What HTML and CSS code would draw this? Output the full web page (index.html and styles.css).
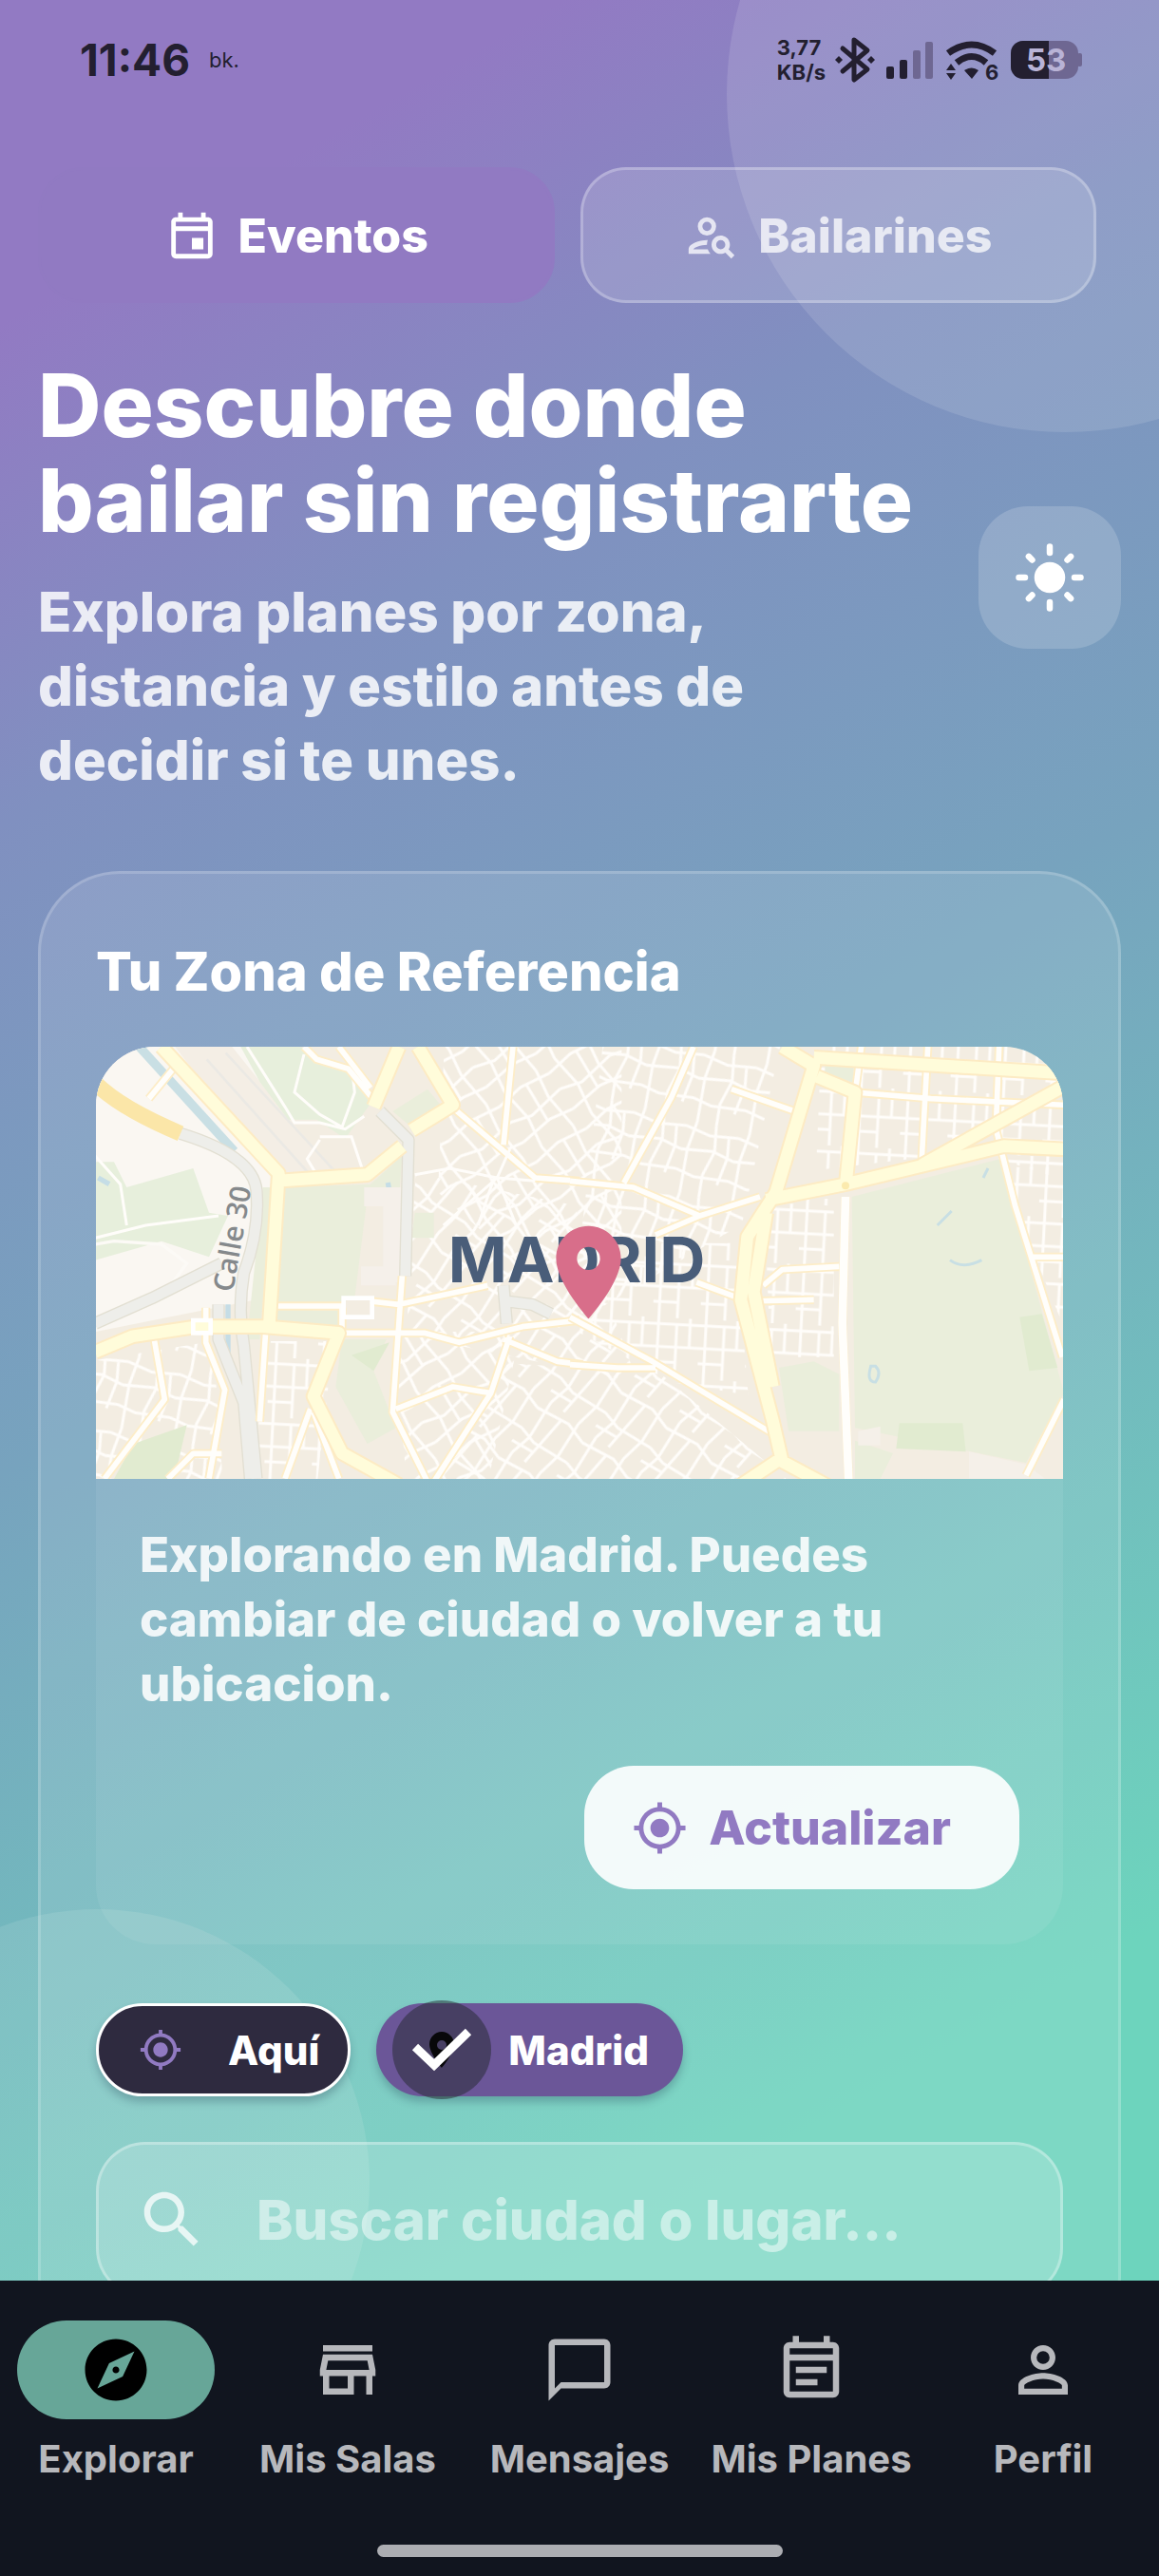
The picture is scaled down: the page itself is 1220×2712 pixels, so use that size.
FILE: index.html
```html
<!DOCTYPE html>
<html lang="es">
<head>
    <meta charset="UTF-8">
    <meta name="viewport" content="width=device-width, initial-scale=1.0">
    <title>Explorar</title>
    <link rel="stylesheet" href="styles.css">
</head>
<body>
    <div class="screen">
        <div class="glow glow-top"></div>
        <div class="glow glow-bottom"></div>

        <div class="status-bar">
            <span class="clock">11:46</span>
            <span class="carrier">bk.</span>
            <span class="speed">3,77<br>KB/s</span>
            <svg class="status-icons" viewBox="0 0 264 50" aria-hidden="true">
                <!-- bluetooth -->
                <path d="M10 13l26 22-14 11V4l14 11L10 37" fill="none" stroke="#231f30" stroke-width="5" stroke-linejoin="round" stroke-linecap="round"/>
                <path d="M6 21l4 4-4 4-4-4zM40 21l4 4-4 4-4-4z" fill="#231f30"/>
                <!-- signal -->
                <rect x="56" y="32" width="8" height="13" rx="2" fill="#231f30"/>
                <rect x="70" y="25" width="8" height="20" rx="2" fill="#231f30"/>
                <rect x="84" y="15" width="8" height="30" rx="2" fill="#6e6792"/>
                <rect x="97" y="6" width="8" height="39" rx="2" fill="#6e6792"/>
                <!-- wifi -->
                <path d="M121 18q25-18 49 0M130 28q16-13 31 0" fill="none" stroke="#231f30" stroke-width="7"/>
                <path d="M138 36q8-5 15 0l-7 9zM119 36l5-7 5 7zM119 39l5 7 5-7z" fill="#231f30"/>
                <text x="160" y="46" class="wifi-gen">6</text>
                <!-- battery -->
                <rect x="187" y="5" width="71" height="40" rx="13" fill="#6e6792"/>
                <rect x="257" y="18" width="5" height="14" rx="2" fill="#6e6792"/>
                <path d="M200 5h27v40h-27a13 13 0 0 1-13-13V18a13 13 0 0 1 13-13z" fill="#231f30"/>
                <text x="203" y="37" class="battery-level">53</text>
            </svg>
        </div>

        <main class="content">
            <div class="tabs">
                <button class="tab tab-active" type="button">
                    <svg viewBox="0 0 24 24" aria-hidden="true"><path d="M19 4h-1V2h-2v2H8V2H6v2H5c-1.11 0-1.99.9-1.99 2L3 20c0 1.1.89 2 2 2h14c1.1 0 2-.9 2-2V6c0-1.1-.9-2-2-2zm0 16H5V10h14v10zm0-12H5V6h14v2zm-7 5h5v5h-5z"/></svg>
                    Eventos
                </button>
                <button class="tab" type="button">
                    <svg viewBox="0 0 24 24" aria-hidden="true"><path fill-rule="evenodd" d="M10 4a4 4 0 1 0 0 8 4 4 0 0 0 0-8zm0 2a2 2 0 1 1 0 4 2 2 0 0 1 0-4zM4 18c.22-.72 3.31-2 6-2 0-.7.13-1.37.35-1.99C7.62 13.91 2 15.27 2 18v2h9.54c-.52-.58-.93-1.25-1.19-2H4zM19.43 18.02c.36-.59.57-1.28.57-2.02 0-2.21-1.79-4-4-4s-4 1.79-4 4 1.79 4 4 4c.74 0 1.43-.22 2.02-.57L20.59 22 22 20.59l-2.57-2.57zM16 18a2 2 0 1 1 0-4 2 2 0 0 1 0 4z"/></svg>
                    Bailarines
                </button>
            </div>

            <header class="intro">
                <div class="intro-text">
                    <h1>Descubre donde<br>bailar sin registrarte</h1>
                    <p>Explora planes por zona,<br>distancia y estilo antes de<br>decidir si te unes.</p>
                </div>
                <button class="theme-button" type="button" aria-label="Cambiar tema">
                    <svg viewBox="0 0 24 24" aria-hidden="true">
                        <circle cx="12" cy="12" r="5"/>
                        <path d="M12 2v2M12 20v2M2 12h2M20 12h2M5.2 5.2l1.1 1.1M17.7 17.7l1.1 1.1M5.2 18.8l1.1-1.1M17.7 6.3l1.1-1.1" fill="none" stroke="#fff" stroke-width="2" stroke-linecap="round"/>
                    </svg>
                </button>
            </header>

            <section class="zone-card">
                <h2>Tu Zona de Referencia</h2>

                <div class="zone-box">
                    <div class="map">
                        <svg class="map-tiles" viewBox="0 0 3054 1365" preserveAspectRatio="xMidYMid slice" role="img" aria-label="Mapa de Madrid">
                            <defs>
                                <pattern id="blocksA" width="170" height="230" patternUnits="userSpaceOnUse" patternTransform="rotate(14)">
                                    <path d="M0 20l80 14 90-14M0 96l100-16 70 16M0 160l60 12 110-12M30 0l-10 90 10 140M92 0l14 80-20 80 6 70M140 30l10 60-12 90" class="lane"/>
                                </pattern>
                                <pattern id="blocksB" width="190" height="210" patternUnits="userSpaceOnUse" patternTransform="rotate(-34)">
                                    <path d="M0 30l90-14 100 14M0 90l70 20 120-20M0 165l110-14 80 14M40 0l16 110-16 100M110 16l-8 140M160 0l-14 90 14 120" class="lane"/>
                                </pattern>
                                <pattern id="blocksC" width="150" height="190" patternUnits="userSpaceOnUse" patternTransform="rotate(3)">
                                    <path d="M0 20h150M0 92h150M0 140h80M20 0v190M78 20v170M120 0v92" class="lane"/>
                                </pattern>
                                <pattern id="blocksD" width="180" height="200" patternUnits="userSpaceOnUse" patternTransform="rotate(38)">
                                    <path d="M0 40l110-20 70 20M0 120l60 14 120-14M24 0l14 130-14 70M84 25l-10 175M134 0l12 120-12 80M0 170l74-10" class="lane"/>
                                </pattern>
                            </defs>
                            <rect width="3054" height="1365" fill="#f3ede2"/>

                            <!-- pale ground to the west -->
                            <path d="M0 0h560L560 420 500 800 0 900z" fill="#faf7f2"/>
                            <path d="M250 0h180l320 400-190 10z" fill="#f4eee5"/>

                            <!-- street blocks -->
                            <path d="M1100 0h560v700l-240 60-340-300z" fill="url(#blocksB)"/>
                            <path d="M1600 0h560l-120 560-540 320z" fill="url(#blocksA)"/>
                            <path d="M1010 400l500 100 200 560-730-150z" fill="url(#blocksD)"/>
                            <path d="M1560 620h460l40 480-240-40-300-160z" fill="url(#blocksC)"/>
                            <path d="M940 900h400l-100 465H980z" fill="url(#blocksB)"/>
                            <path d="M1300 1000l480 30 400 335H1080z" fill="url(#blocksD)"/>
                            <path d="M2290 0h764v420l-280-90-500 60z" fill="url(#blocksC)"/>
                            <path d="M520 930h230l-50 435H510z" fill="url(#blocksC)"/>
                            <path d="M0 990l370-60 30 435H0z" fill="url(#blocksA)"/>
                            <path d="M2850 380h204v500z" fill="url(#blocksC)"/>
                            <path d="M2110 480h220v500h-200z" fill="url(#blocksC)"/>
                            <path d="M350 40l340 380M410 20l360 390" class="rail"/>

                            <g transform="translate(-33 -36)">
                                <!-- parks -->
                                <path d="M490 36h190l160 80 60 100-80 110-90-60-90 0-90-120z" class="park"/>
                                <path d="M30 400h60l40 80 210-60 50 140 60 10-60 130-150-50-210 60z" class="park"/>
                                <path d="M600 480l300-10 100-90-10 140-100-10-40 320-270 80z" class="garden"/>
                                <path d="M970 240l110-70 50 60-100 60zM1040 560h60v80h-70z" class="garden"/>
                                <path d="M560 480h30l-40 480h-40zM590 870h210v50H590z" class="garden"/>
                                <path d="M810 960h140l-40 100 70 180-90 50-100-180z" class="garden"/>
                                <path d="M840 1010l120-40-50 90z" class="lawn"/>
                                <path d="M90 1401l60-110 170-60-40 170z" class="lawn"/>
                                <!-- water -->
                                <path d="M170 36l300 330" fill="none" stroke="#c9dfe4" stroke-width="28"/>
                                <path d="M450 850v160M955 465l5 30M40 450l35 20" fill="none" stroke="#c5dde6" stroke-width="16"/>
                                <!-- small ways inside the parks -->
                                <path d="M510 36l120 190 30 50 80 0 80 20 60-40M690 60l-30 120 80 70 70 40 40-110-10-90M30 640l160-40 230-30M30 380l80 90 20 130M740 320l100 0 40 120M740 330l-40 60 30 50" class="lane"/>
                                <path d="M30 660l60-10 150 10 80 60-60 80-180 90" fill="none" stroke="#fcfaf6" stroke-width="10"/>
                                <path d="M970 520v260M880 510l130 0M870 760h110" fill="none" stroke="#f5f0ea" stroke-width="60"/>
                                <!-- M-30 -->
                                <path d="M300 310q230 70 240 180 10 130-40 260-20 120 0 230l40 420M30 910l180-80 220-110M420 850l0 110 80 200 20 240" class="ring-edge"/>
                                <path d="M300 310q230 70 240 180 10 130-40 260-20 120 0 230l40 420M30 910l180-80 220-110M420 850l0 110 80 200 20 240" class="ring"/>
                                <path d="M930 240l90 90-10 430M1320 790l10 120M1330 840l80 10 60 30" class="ring-edge"/>
                                <path d="M930 240l90 90-10 430M1320 790l10 120M1330 840l80 10 60 30" class="ring"/>
                                <path d="M30 150q80 80 270 160" fill="none" stroke="#fbe6a8" stroke-width="50"/>

                                <!-- secondary streets -->
                                <path d="M290 90l-90 110M690 36l40 40 100 30 90 110M800 36l100 130M1350 36l-30 310M1150 220l270 230 140 10M570 855h240M810 860v80h260l110 30 200-50 180-20M900 840l90 10 280-60M1000 760l-30 430 110 220M980 1180l180-70 120 20M1340 950l-60 180-180 280M570 920l-20 300M210 920l40 230-190 250M380 860l0 110 60 150-50 280M260 1401l80-80h90M710 1180l-80 220M720 1190l80 210M1320 960l170 70 80 10" class="street-edge"/>
                                <path d="M290 90l-90 110M690 36l40 40 100 30 90 110M800 36l100 130M1350 36l-30 310M1150 220l270 230 140 10M570 855h240M810 860v80h260l110 30 200-50 180-20M900 840l90 10 280-60M1000 760l-30 430 110 220M980 1180l180-70 120 20M1340 950l-60 180-180 280M570 920l-20 300M210 920l40 230-190 250M380 860l0 110 60 150-50 280M260 1401l80-80h90M710 1180l-80 220M720 1190l80 210M1320 960l170 70 80 10" class="street"/>
                                <!-- avenues -->
                                <path d="M240 36l370 400-30 480M600 460l290-20 110-90M1030 300l130-80-110-184M990 36l-80 190M30 1000l120-50 200-30 210 0 240 20-80 200 90 180 180 100" class="avenue-edge"/>
                                <path d="M240 36l370 400-30 480M600 460l290-20 110-90M1030 300l130-80-110-184M990 36l-80 190M30 1000l120-50 200-30 210 0 240 20-80 200 90 180 180 100" class="avenue"/>
                                <path d="M340 900h55v40h-55zM815 830h90v60h-90z" fill="none" stroke="#fff" stroke-width="14"/>
                                <path d="M1040 440l110-20 150 30 120 10M1300 450l-170 150M1300 450l60 150M1290 450l-50 150M1300 450l40-90" class="lane"/>
                            </g>

                            <g transform="translate(1497 -36)">
                                <!-- Retiro and gardens -->
                                <path d="M890 510l470-120 200 740-120 220-540-110z" class="garden"/>
                                <path d="M660 1050l110-20 80 40v180H690zM805 80h90v70l-90-30zM900 1280l120 40-40 80h-80z" class="garden"/>
                                <path d="M1040 1225h200l10 90-220-10zM1420 890l70-10 50 170-90 10z" class="lawn"/>
                                <path d="M1320 420l-15 30M1160 600l45-45M1200 710q40 30 100 0M950 1045q-15 50 15 50 20-30 0-50z" fill="none" stroke="#c8dfe4" stroke-width="9"/>
                                <path d="M1260 1315l180 40 60 45h-240zM910 1250l70-15 0 60 -70 0z" fill="#f5f0e9"/>

                                <path d="M390 36l-70 160-150 270M0 460l200 20 210 90M270 630l140-60 190-60M510 170l200 70M920 36l-20 150M900 180l240 20 420 20M1130 36l-20 370M1355 36l-10 260 60 240 150 480M1460 700h100M400 780l160 60 210-5M610 790l60-50 180-10M870 510l-10 400 20 500M0 890l260 140 400 240M0 1040l150 10h120M1560 1150l-120 240" class="street-edge"/>
                                <path d="M390 36l-70 160-150 270M0 460l200 20 210 90M270 630l140-60 190-60M510 170l200 70M920 36l-20 150M900 180l240 20 420 20M1130 36l-20 370M1355 36l-10 260 60 240 150 480M1460 700h100M400 780l160 60 210-5M610 790l60-50 180-10M0 890l260 140 400 240M0 1040l150 10h120M1560 1150l-120 240" class="street"/>
                                <path d="M870 510l-10 400 20 500" fill="none" stroke="#fffefb" stroke-width="26"/>
                                <path d="M670 36l100 60-120 400-90 140-20 200 100 380 30 130 150 80M780 130l120 50-30 300M620 520l250-50 500-120 200 10M770 70l790 50M1110 410l450-250M620 560l-40 250 60 300M660 1340l-120 80" class="avenue-edge"/>
                                <path d="M670 36l100 60-120 400-90 140-20 200 100 380 30 130 150 80M780 130l120 50-30 300M620 520l250-50 500-120 200 10M770 70l790 50M1110 410l450-250M620 560l-40 250 60 300M660 1340l-120 80" class="avenue"/>
                                <circle cx="870" cy="475" r="12" fill="#fbeaae"/>
                            </g>

                            <text x="1112" y="744" class="city-name">MADRID</text>
                            <text transform="translate(432 778) rotate(-80)" class="road-name">Calle 30</text>
                        </svg>
                        <svg class="map-pin" viewBox="0 0 24 24" aria-hidden="true"><path d="M12 2C8.13 2 5 5.13 5 9c0 5.25 7 13 7 13s7-7.75 7-13c0-3.87-3.13-7-7-7zm0 9.5a2.5 2.5 0 0 1 0-5 2.5 2.5 0 0 1 0 5z"/></svg>
                    </div>
                    <div class="zone-info">
                        <p>Explorando en Madrid. Puedes<br>cambiar de ciudad o volver a tu<br>ubicacion.</p>
                        <button class="update-button" type="button">
                            <svg viewBox="0 0 24 24" aria-hidden="true"><path d="M12 8c-2.21 0-4 1.79-4 4s1.79 4 4 4 4-1.79 4-4-1.79-4-4-4zm8.94 3c-.46-4.17-3.77-7.48-7.94-7.94V1h-2v2.06C6.83 3.52 3.52 6.83 3.06 11H1v2h2.06c.46 4.17 3.77 7.48 7.94 7.94V23h2v-2.06c4.17-.46 7.48-3.77 7.94-7.94H23v-2h-2.06zM12 19c-3.87 0-7-3.13-7-7s3.13-7 7-7 7 3.13 7 7-3.13 7-7 7z"/></svg>
                            Actualizar
                        </button>
                    </div>
                </div>

                <div class="chips">
                    <button class="chip chip-here" type="button">
                        <svg viewBox="0 0 24 24" aria-hidden="true"><path d="M12 8c-2.21 0-4 1.79-4 4s1.79 4 4 4 4-1.79 4-4-1.79-4-4-4zm8.94 3c-.46-4.17-3.77-7.48-7.94-7.94V1h-2v2.06C6.83 3.52 3.52 6.83 3.06 11H1v2h2.06c.46 4.17 3.77 7.48 7.94 7.94V23h2v-2.06c4.17-.46 7.48-3.77 7.94-7.94H23v-2h-2.06zM12 19c-3.87 0-7-3.13-7-7s3.13-7 7-7 7 3.13 7 7-3.13 7-7 7z"/></svg>
                        Aquí
                    </button>
                    <button class="chip chip-city" type="button" aria-pressed="true">
                        <svg viewBox="0 0 104 104" aria-hidden="true">
                            <circle cx="52" cy="52" r="52" fill="#23272d" fill-opacity=".5"/>
                            <path fill-rule="evenodd" d="M52 33c-7 0-13 6-13 13 0 10 13 25 13 25s13-15 13-25c0-7-6-13-13-13zm0 9a5 5 0 1 1 0 10 5 5 0 0 1 0-10z" fill="#08080a"/>
                            <path d="M24 49l20 19 36-35" fill="none" stroke="#fff" stroke-width="9"/>
                        </svg>
                        Madrid
                    </button>
                </div>

                <label class="search">
                    <svg viewBox="0 0 24 24" aria-hidden="true"><path d="M15.5 14h-.79l-.28-.27C15.41 12.59 16 11.11 16 9.5 16 5.91 13.09 3 9.5 3S3 5.91 3 9.5 5.91 16 9.5 16c1.61 0 3.09-.59 4.23-1.57l.27.28v.79l5 4.99L20.49 19l-4.99-5zm-6 0C7.01 14 5 11.99 5 9.5S7.01 5 9.5 5 14 7.01 14 9.5 11.99 14 9.5 14z"/></svg>
                    <input type="text" name="city" placeholder="Buscar ciudad o lugar..." aria-label="Buscar ciudad o lugar">
                </label>
            </section>
        </main>
    </div>

    <nav class="bottom-nav">
        <div class="nav-items">
            <a class="nav-item nav-active" href="#">
                <span class="nav-icon"><svg viewBox="0 0 24 24" aria-hidden="true"><path d="M12 10.9c-.61 0-1.1.49-1.1 1.1s.49 1.1 1.1 1.1c.61 0 1.1-.49 1.1-1.1s-.49-1.1-1.1-1.1zM12 2C6.48 2 2 6.48 2 12s4.48 10 10 10 10-4.48 10-10S17.52 2 12 2zm2.19 12.19L6 18l3.81-8.19L18 6l-3.81 8.19z"/></svg></span>
                Explorar
            </a>
            <a class="nav-item" href="#">
                <span class="nav-icon"><svg viewBox="0 0 24 24" aria-hidden="true"><path d="M18.36 9l.6 3H5.04l.6-3h12.72M20 4H4v2h16V4zm0 3H4l-1 5v2h1v6h10v-6h4v6h2v-6h1v-2l-1-5zM6 18v-4h6v4H6z"/></svg></span>
                Mis Salas
            </a>
            <a class="nav-item" href="#">
                <span class="nav-icon"><svg viewBox="0 0 24 24" aria-hidden="true"><path d="M20 2H4c-1.1 0-2 .9-2 2v18l4-4h14c1.1 0 2-.9 2-2V4c0-1.1-.9-2-2-2zm0 14H6l-2 2V4h16v12z"/></svg></span>
                Mensajes
            </a>
            <a class="nav-item" href="#">
                <span class="nav-icon"><svg viewBox="0 0 24 24" aria-hidden="true"><path d="M19 3h-1V1h-2v2H8V1H6v2H5c-1.1 0-2 .9-2 2v14c0 1.1.9 2 2 2h14c1.1 0 2-.9 2-2V5c0-1.1-.9-2-2-2zm0 16H5V9h14v10zm0-12H5V5h14v2zM7 11h10v2H7zm0 4h7v2H7z"/></svg></span>
                Mis Planes
            </a>
            <a class="nav-item" href="#">
                <span class="nav-icon"><svg viewBox="0 0 24 24" aria-hidden="true"><path d="M12 5.9a2.1 2.1 0 1 1 0 4.2 2.1 2.1 0 0 1 0-4.2m0 9c2.97 0 6.1 1.46 6.1 2.1v1.1H5.9V17c0-.64 3.13-2.1 6.1-2.1M12 4C9.79 4 8 5.79 8 8s1.79 4 4 4 4-1.79 4-4-1.79-4-4-4zm0 9c-2.67 0-8 1.34-8 4v3h16v-3c0-2.66-5.33-4-8-4z"/></svg></span>
                Perfil
            </a>
        </div>
        <div class="home-bar"></div>
    </nav>
</body>
</html>
```

FILE: styles.css
```css
* {
    box-sizing: border-box;
}
body {
    margin: 0;
    height: 100vh;
    display: flex;
    flex-direction: column;
    overflow: hidden;
    background: #11151f;
    font-family: Inter, "Noto Sans", sans-serif;
    font-weight: 800;
    color: #fff;
}
h1, h2, p {
    margin: 0;
    font-weight: 800;
}
button {
    border: none;
    padding: 0;
    background: none;
    font: inherit;
    color: inherit;
    display: flex;
    align-items: center;
}
button svg {
    fill: currentColor;
    flex: none;
}
.screen {
    position: relative;
    flex: 1;
    min-height: 0;
    overflow: hidden;
    background: linear-gradient(150deg, #927ac3 0%, #927ac3 11%, #8090c0 28%, #77a3be 50%, #6dd4bd 88%, #6dd4bd 100%);
}

/* soft circles behind the content */
.glow {
    position: absolute;
    border-radius: 50%;
    background: rgba(255, 255, 255, 0.12);
}
.glow-top {
    width: 712px;
    height: 712px;
    top: -257px;
    right: -257px;
}
.glow-bottom {
    width: 574px;
    height: 574px;
    left: -185px;
    bottom: -183px;
    background: rgba(255, 255, 255, 0.1);
}

/* status bar */
.status-bar {
    position: relative;
    display: flex;
    align-items: center;
    height: 126px;
    padding: 0 79px 0 84px;
    font-weight: 700;
    color: #231f30;
}
.clock {
    font-size: 46px;
}
.carrier {
    margin-left: 20px;
    font-size: 22px;
    font-weight: 400;
}
.speed {
    margin-left: auto;
    font-size: 22px;
    line-height: 26px;
}
.status-icons {
    width: 264px;
    height: 50px;
    margin-left: 8px;
}
.wifi-gen {
    font-size: 22px;
    fill: #231f30;
}
.battery-level {
    font-size: 33px;
    fill: #b9b3d6;
}

/* tabs */
.content {
    position: relative;
    padding: 50px 40px 0;
}
.tabs {
    display: flex;
    gap: 27px;
    padding-right: 26px;
}
.tab {
    flex: 1;
    justify-content: center;
    gap: 20px;
    height: 143px;
    border: 3px solid rgba(255, 255, 255, 0.25);
    border-radius: 48px;
    background: rgba(255, 255, 255, 0.14);
    font-size: 50px;
    color: rgba(255, 255, 255, 0.75);
}
.tab svg {
    width: 58px;
    height: 58px;
}
.tab-active {
    border-color: #917ac2;
    background: #917ac2;
    color: #fff;
}

/* intro */
.intro {
    display: flex;
    align-items: center;
    justify-content: space-between;
    padding-top: 58px;
}
.intro h1 {
    font-size: 92px;
    line-height: 100px;
    white-space: nowrap;
}
.intro p {
    margin-top: 28px;
    font-size: 58px;
    line-height: 78px;
    color: rgba(255, 255, 255, 0.84);
}
.theme-button {
    justify-content: center;
    width: 150px;
    height: 150px;
    border-radius: 52px;
    background: rgba(255, 255, 255, 0.17);
}
.theme-button svg {
    width: 78px;
    height: 78px;
}

/* zone card */
.zone-card {
    margin-top: 78px;
    padding: 68px 58px 60px;
    border: 3px solid rgba(255, 255, 255, 0.18);
    border-radius: 86px;
    background: rgba(255, 255, 255, 0.11);
}
.zone-card h2 {
    margin-bottom: 44px;
    font-size: 56px;
    line-height: 70px;
}
.zone-box {
    overflow: hidden;
    border-radius: 62px;
    background: rgba(255, 255, 255, 0.07);
}
.map {
    position: relative;
    height: 455px;
}
.map-tiles {
    display: block;
    width: 100%;
    height: 100%;
}
.map-pin {
    position: absolute;
    left: 50%;
    top: 179px;
    width: 117px;
    height: 117px;
    margin-left: -49px;
    fill: #d86e8a;
}
.lane {
    fill: none;
    stroke: #fffdfa;
    stroke-width: 9px;
}
.rail {
    fill: none;
    stroke: #ebe9e4;
    stroke-width: 8px;
}
.park {
    fill: #e7efdc;
}
.garden {
    fill: #eaeedb;
}
.lawn {
    fill: #e1ebd0;
}
.ring, .ring-edge, .street, .street-edge, .avenue, .avenue-edge {
    fill: none;
    stroke-linejoin: round;
}
.ring-edge {
    stroke: #e2dfd2;
    stroke-width: 40px;
}
.ring {
    stroke: #eeeeea;
    stroke-width: 32px;
}
.street-edge {
    stroke: #fdedc8;
    stroke-width: 28px;
}
.street {
    stroke: #fffefb;
    stroke-width: 17px;
}
.avenue-edge {
    stroke: #fdebc4;
    stroke-width: 50px;
}
.avenue {
    stroke: #fffcda;
    stroke-width: 38px;
}
.city-name {
    font-size: 200px;
    font-weight: 700;
    fill: #495d79;
}
.road-name {
    font-family: "Open Sans", "Noto Sans", sans-serif;
    font-size: 90px;
    font-weight: 600;
    fill: #85898c;
}
.zone-info {
    padding: 46px 46px 58px;
}
.zone-info p {
    margin-bottom: 52px;
    font-size: 51px;
    line-height: 68px;
    color: rgba(255, 255, 255, 0.87);
}
.update-button {
    margin-left: auto;
    gap: 22px;
    height: 130px;
    padding: 0 72px 0 50px;
    border-radius: 52px;
    background: rgba(255, 255, 255, 0.9);
    font-size: 50px;
    color: #917ac2;
}
.update-button svg {
    width: 59px;
    height: 59px;
}

/* chips */
.chips {
    display: flex;
    gap: 27px;
    margin-top: 62px;
}
.chip {
    height: 98px;
    border-radius: 49px;
    font-size: 42px;
    box-shadow: 0 6px 8px rgba(40, 70, 90, 0.3);
}
.chip-here {
    gap: 48px;
    padding: 0 30px 0 42px;
    border: 3px solid #fff;
    background: #2e2a3f;
}
.chip-here svg {
    width: 46px;
    height: 46px;
    fill: #917ac2;
}
.chip-city {
    gap: 18px;
    padding: 0 36px 0 17px;
    background: #6b5698;
}
.chip-city svg {
    width: 104px;
    height: 104px;
}

/* search */
.search {
    display: flex;
    align-items: center;
    gap: 50px;
    height: 164px;
    margin-top: 48px;
    padding: 0 38px;
    border: 3px solid rgba(255, 255, 255, 0.3);
    border-radius: 52px;
    background: rgba(255, 255, 255, 0.17);
}
.search svg {
    flex: none;
    width: 78px;
    height: 78px;
    fill: rgba(255, 255, 255, 0.75);
}
.search input {
    flex: 1;
    min-width: 0;
    padding: 0;
    border: none;
    outline: none;
    background: none;
    font: inherit;
    font-size: 58px;
    color: #fff;
}
.search input::placeholder {
    color: rgba(255, 255, 255, 0.5);
    opacity: 1;
}

/* bottom navigation */
.bottom-nav {
    flex: none;
    padding: 42px 0 20px;
    background: #11151f;
}
.nav-items {
    display: grid;
    grid-template-columns: repeat(5, 1fr);
}
.nav-item {
    display: flex;
    flex-direction: column;
    align-items: center;
    gap: 17px;
    font-size: 40px;
    font-weight: 700;
    line-height: 50px;
    color: #b7b8bc;
    text-decoration: none;
    white-space: nowrap;
}
.nav-icon {
    display: flex;
    align-items: center;
    justify-content: center;
    width: 208px;
    height: 104px;
    border-radius: 52px;
}
.nav-icon svg {
    width: 78px;
    height: 78px;
    fill: currentColor;
}
.nav-active .nav-icon {
    background: #67a698;
    color: #000;
}
.home-bar {
    width: 35%;
    height: 13px;
    margin: 65px auto 0;
    border-radius: 7px;
    background: #acadb2;
}
```
